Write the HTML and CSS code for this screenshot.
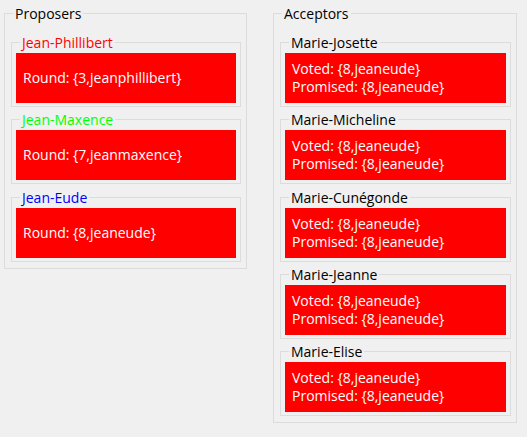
FILE: index.html
```html
<!DOCTYPE html>
<html>
<head>
<meta charset="utf-8">
<link rel="stylesheet" href="styles.css">
</head>
<body>
<div class="app">
  <fieldset class="group proposers">
    <legend class="group-title">Proposers</legend>
    <fieldset class="node">
      <legend class="node-title red">Jean-Phillibert</legend>
      <div class="panel">Round: {3,jeanphillibert}</div>
    </fieldset>
    <fieldset class="node">
      <legend class="node-title green">Jean-Maxence</legend>
      <div class="panel">Round: {7,jeanmaxence}</div>
    </fieldset>
    <fieldset class="node">
      <legend class="node-title blue">Jean-Eude</legend>
      <div class="panel">Round: {8,jeaneude}</div>
    </fieldset>
  </fieldset>
  <fieldset class="group acceptors">
    <legend class="group-title">Acceptors</legend>
    <fieldset class="node">
      <legend class="node-title">Marie-Josette</legend>
      <div class="panel"><div>Voted: {8,jeaneude}</div><div>Promised: {8,jeaneude}</div></div>
    </fieldset>
    <fieldset class="node">
      <legend class="node-title">Marie-Micheline</legend>
      <div class="panel"><div>Voted: {8,jeaneude}</div><div>Promised: {8,jeaneude}</div></div>
    </fieldset>
    <fieldset class="node">
      <legend class="node-title">Marie-Cunégonde</legend>
      <div class="panel"><div>Voted: {8,jeaneude}</div><div>Promised: {8,jeaneude}</div></div>
    </fieldset>
    <fieldset class="node">
      <legend class="node-title">Marie-Jeanne</legend>
      <div class="panel"><div>Voted: {8,jeaneude}</div><div>Promised: {8,jeaneude}</div></div>
    </fieldset>
    <fieldset class="node">
      <legend class="node-title">Marie-Elise</legend>
      <div class="panel"><div>Voted: {8,jeaneude}</div><div>Promised: {8,jeaneude}</div></div>
    </fieldset>
  </fieldset>
</div>
</body>
</html>
```
FILE: styles.css
```css
html, body {
  margin: 0;
  padding: 0;
  background: #f0f0f0;
  width: 527px;
  height: 437px;
  overflow: hidden;
}
body {
  font-family: "Open Sans", "Noto Sans", sans-serif;
  font-size: 14px;
  color: #000;
}
.app {
  display: flex;
  align-items: flex-start;
  padding: 4px 0 0 4px;
  gap: 26px;
}
.group {
  margin: 0;
  min-inline-size: 0;
  border: 1px solid #dcdcdc;
  padding: 10px 5px 6px 6px;
  display: flex;
  flex-direction: column;
  gap: 3.25px;
}
.proposers { width: 243px; box-sizing: border-box; }
.acceptors { width: 244px; box-sizing: border-box; }
.group-title {
  padding: 0 2px;
  margin-left: 2px;
  line-height: 19px;
  height: 19px;
}
.node {
  margin: 0;
  min-inline-size: 0;
  border: 1px solid #dcdcdc;
  padding: 1px 4px 3px 4px;
}
.node-title {
  padding: 0 2px;
  margin-left: 4px;
  line-height: 19px;
  height: 19px;
}
.red { color: #ff0000; }
.green { color: #00ff00; }
.blue { color: #0000ff; }
.panel {
  height: 50px;
  background: #ff0000;
  color: #fff;
  display: flex;
  flex-direction: column;
  justify-content: center;
  padding-left: 7px;
  line-height: 18px;
}
```
